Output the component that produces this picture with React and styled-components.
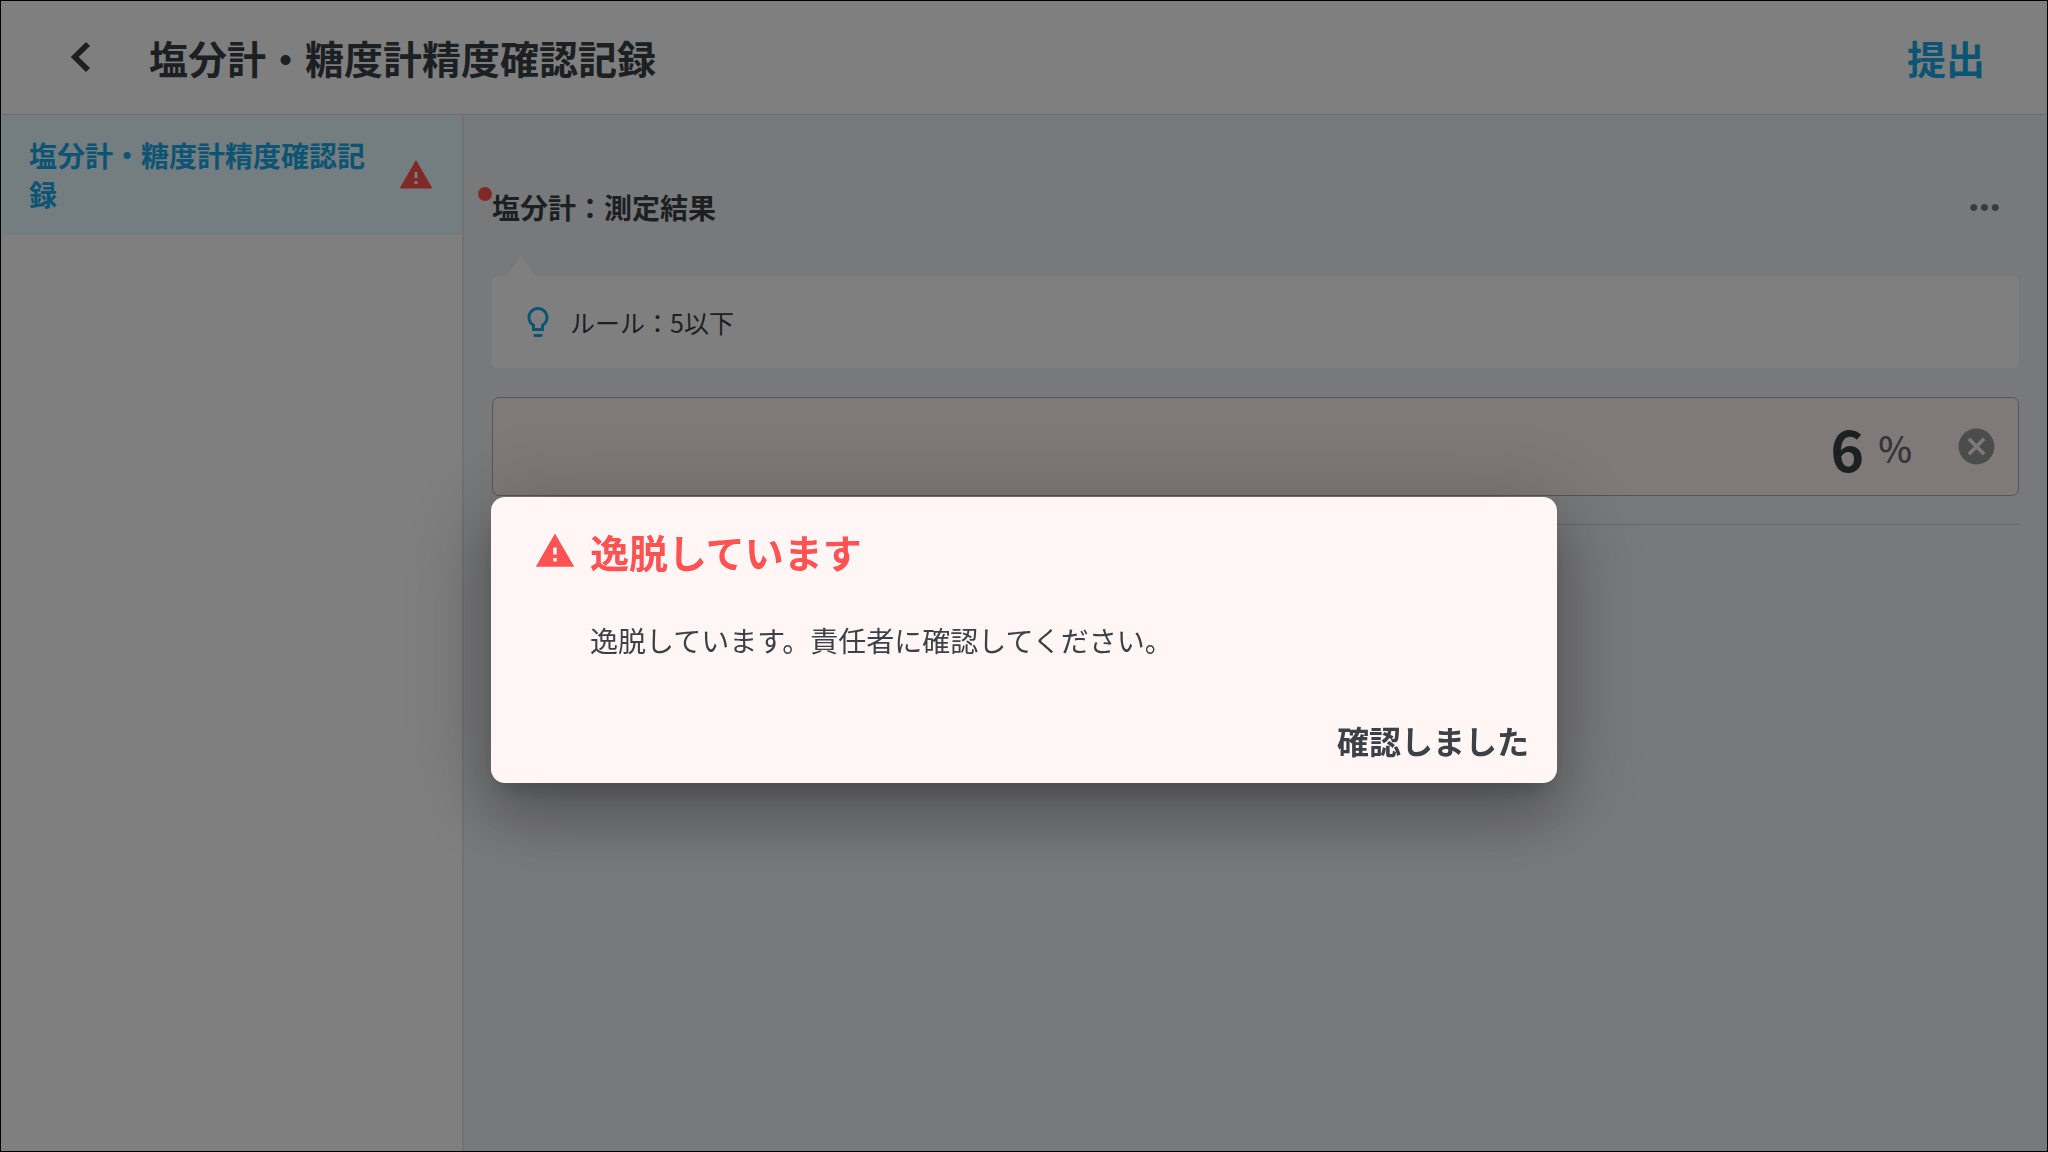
import { useState } from "react";
import styled, { createGlobalStyle } from "styled-components";

const GlobalStyle = createGlobalStyle`
  * {
    box-sizing: border-box;
  }

  body {
    margin: 0;
    color: #3b4147;
    font-family: "Noto Sans CJK JP", "Noto Sans", sans-serif;
  }

  button,
  input {
    font-family: inherit;
    color: inherit;
  }
`;

const Page = styled.div`
  min-height: 100vh;
  display: flex;
  flex-direction: column;
  border: 1px solid #000;
  background: #f0f2f5;
`;

const Header = styled.header`
  display: flex;
  align-items: center;
  gap: 38px;
  height: 114px;
  padding: 0 62px 2px 50px;
  background: #fff;
  border-bottom: 1px solid #dcdce0;
`;

const IconButton = styled.button`
  display: flex;
  padding: 0;
  border: 0;
  background: none;
  color: ${(props) => props.$color || "inherit"};
  cursor: pointer;
`;

const PageTitle = styled.h1`
  flex: 1;
  margin: 0;
  font-size: 39px;
  line-height: 56px;
  font-weight: 700;
`;

const SubmitButton = styled.button`
  padding: 0;
  border: 0;
  background: none;
  color: #18a8e8;
  font-size: 39px;
  line-height: 56px;
  font-weight: 700;
  cursor: pointer;
`;

const Body = styled.div`
  flex: 1;
  display: flex;
`;

const Sidebar = styled.nav`
  flex: 0 0 463px;
  background: #fff;
  border-right: 2px solid #e4e4ea;
`;

const SidebarItem = styled.a`
  display: flex;
  align-items: center;
  justify-content: space-between;
  gap: 20px;
  padding: 21px 28px;
  background: #e8fafe;
  color: #18a8e8;
  font-size: 28px;
  line-height: 39px;
  font-weight: 700;
  text-decoration: none;
`;

const Main = styled.main`
  flex: 1;
  padding: 64px 28px;
`;

const Question = styled.section`
  padding-bottom: 28px;
  border-bottom: 1px solid #cacacc;
`;

const QuestionHeader = styled.div`
  display: flex;
  align-items: center;
  justify-content: space-between;
  padding: 0 13px 2px 0;
`;

const QuestionTitle = styled.label`
  position: relative;
  font-size: 28px;
  line-height: 56px;
  font-weight: 700;

  &::before {
    content: "";
    position: absolute;
    top: 8px;
    left: -14px;
    width: 14px;
    height: 14px;
    border-radius: 50%;
    background: #ff5252;
  }
`;

const Rule = styled.div`
  position: relative;
  display: flex;
  align-items: center;
  gap: 14px;
  height: 92px;
  margin: 39px 0 29px;
  padding: 0 28px;
  border-radius: 6px;
  background: #fff;
  font-size: 25px;
  line-height: 36px;

  &::before {
    content: "";
    position: absolute;
    bottom: 100%;
    left: 15px;
    border: 14px solid transparent;
    border-top: 0;
    border-bottom: 20px solid #fff;
  }
`;

const Field = styled.div`
  display: flex;
  align-items: center;
  height: 99px;
  padding-right: 20px;
  border: 1px solid #acacac;
  border-radius: 7px;
  background: #fff3f3;
`;

const ValueInput = styled.input`
  flex: 1;
  min-width: 0;
  padding: 0 14px;
  border: 0;
  background: none;
  font-size: 57px;
  line-height: 84px;
  font-weight: 700;
  text-align: right;
`;

const Unit = styled.span`
  margin-right: 43px;
  color: #6b6b6b;
  font-size: 36px;
  line-height: 52px;
  font-weight: 500;
`;

const Overlay = styled.div`
  position: fixed;
  inset: 0;
  display: flex;
  align-items: center;
  justify-content: center;
  padding: 128px 24px 0;
  background: rgba(0, 0, 0, 0.5);
`;

const Dialog = styled.div`
  width: 100%;
  max-width: 1066px;
  padding: 26px 28px 18px 43px;
  border-radius: 14px;
  background: #fff6f5;
  box-shadow:
    0 16px 22px -10px rgba(0, 0, 0, 0.2),
    0 34px 54px 4px rgba(0, 0, 0, 0.16),
    0 14px 90px 12px rgba(0, 0, 0, 0.2);
`;

const DialogHeader = styled.div`
  display: flex;
  align-items: center;
  gap: 14px;
  color: #ff5252;
`;

const DialogTitle = styled.h2`
  margin: 0;
  font-size: 39px;
  line-height: 56px;
  font-weight: 700;
`;

const DialogText = styled.p`
  margin: 40px 0 54px;
  padding-left: 56px;
  font-size: 28px;
  line-height: 42px;
`;

const DialogActions = styled.div`
  display: flex;
  justify-content: flex-end;
`;

const ConfirmButton = styled.button`
  padding: 0;
  border: 0;
  background: none;
  font-size: 32px;
  line-height: 50px;
  font-weight: 700;
  cursor: pointer;
`;

const Svg = styled.svg`
  flex: none;
  display: block;
  width: ${(props) => props.$size}px;
  height: ${(props) => props.$size}px;
  fill: currentColor;
`;

const SidebarWarning = styled.span`
  color: #ff5252;
`;

const RuleIcon = styled.span`
  color: #18a8e8;
`;

const Icon = ({ size, path }) => (
  <Svg $size={size} viewBox="0 0 24 24" aria-hidden="true">
    <path d={path} />
  </Svg>
);

const BACK = "M15.6 7.6 14 6l-6.1 6 6.1 6 1.6-1.6L11.1 12z";
const WARNING =
  "M1 21h22L12 2 1 21zm12-3h-2v-2h2v2zm0-4h-2v-4h2v4z";
const MORE =
  "M6 10c-1.1 0-2 .9-2 2s.9 2 2 2 2-.9 2-2-.9-2-2-2zm12 0c-1.1 0-2 .9-2 2s.9 2 2 2 2-.9 2-2-.9-2-2-2zm-6 0c-1.1 0-2 .9-2 2s.9 2 2 2 2-.9 2-2-.9-2-2-2z";
const BULB =
  "M9 20.2v.8c0 .55.45 1 1 1h4c.55 0 1-.45 1-1v-.8c0-.1-.1-.2-.2-.2H9.200c-.1 0-.2.1-.2.2zM12 2C8.14 2 5 5.14 5 9c0 2.38 1.19 4.47 3 5.74V18h8v-3.26c1.81-1.27 3-3.36 3-5.74 0-3.86-3.14-7-7-7zm2.85 11.1-.85.6V16h-4v-2.3l-.85-.6C7.8 12.16 7 10.63 7 9c0-2.76 2.24-5 5-5s5 2.24 5 5c0 1.63-.8 3.16-2.15 4.1z";
const CANCEL =
  "M12 2C6.47 2 2 6.47 2 12s4.47 10 10 10 10-4.47 10-10S17.53 2 12 2zm5 13.59L15.59 17 12 13.41 8.41 17 7 15.59 10.59 12 7 8.41 8.41 7 12 10.59 15.59 7 17 8.41 13.41 12 17 15.59z";

const App = () => {
  const [value, setValue] = useState("6");
  const [open, setOpen] = useState(true);

  return (
    <>
      <GlobalStyle />
      <Page>
        <Header>
          <IconButton aria-label="戻る">
            <Icon size={60} path={BACK} />
          </IconButton>
          <PageTitle>塩分計・糖度計精度確認記録</PageTitle>
          <SubmitButton>提出</SubmitButton>
        </Header>

        <Body>
          <Sidebar>
            <SidebarItem href="#record">
              塩分計・糖度計精度確認記録
              <SidebarWarning>
                <Icon size={36} path={WARNING} />
              </SidebarWarning>
            </SidebarItem>
          </Sidebar>

          <Main id="record">
            <Question>
              <QuestionHeader>
                <QuestionTitle htmlFor="salinity">
                  塩分計：測定結果
                </QuestionTitle>
                <IconButton aria-label="メニュー" $color="#757575">
                  <Icon size={43} path={MORE} />
                </IconButton>
              </QuestionHeader>

              <Rule>
                <RuleIcon>
                  <Icon size={36} path={BULB} />
                </RuleIcon>
                ルール：5以下
              </Rule>

              <Field>
                <ValueInput
                  id="salinity"
                  inputMode="decimal"
                  value={value}
                  onChange={(e) => setValue(e.target.value)}
                />
                <Unit>%</Unit>
                <IconButton
                  aria-label="クリア"
                  $color="#999"
                  onClick={() => setValue("")}
                >
                  <Icon size={43} path={CANCEL} />
                </IconButton>
              </Field>
            </Question>
          </Main>
        </Body>
      </Page>

      {open && (
        <Overlay>
          <Dialog
            role="alertdialog"
            aria-modal="true"
            aria-labelledby="alert-title"
            aria-describedby="alert-text"
          >
            <DialogHeader>
              <Icon size={42} path={WARNING} />
              <DialogTitle id="alert-title">逸脱しています</DialogTitle>
            </DialogHeader>
            <DialogText id="alert-text">
              逸脱しています。責任者に確認してください。
            </DialogText>
            <DialogActions>
              <ConfirmButton onClick={() => setOpen(false)}>
                確認しました
              </ConfirmButton>
            </DialogActions>
          </Dialog>
        </Overlay>
      )}
    </>
  );
};

export default App;
